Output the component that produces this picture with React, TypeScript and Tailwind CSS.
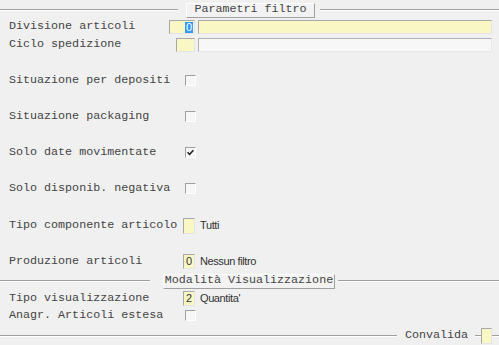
import React from 'react';

/* Courier-like label text used across the form */
const mono = "font-['Liberation_Mono','Courier_New',monospace] text-[11.7px] leading-none text-[#444]";
const sans = "font-['Liberation_Sans',Arial,sans-serif] text-[11px] leading-none text-[#333] tracking-[-0.4px]";

function Etched({ className = '' }: { className?: string }) {
  return <div className={`h-0 border-t border-t-[#a0a0a0] border-b border-b-white ${className}`} />;
}

function RaisedButton({ label, width }: { label: string; width: string }) {
  return (
    <div
      className={`${width} h-[15px] flex items-center justify-center bg-[#f2f2f2] border border-t-white border-l-white border-r-[#a0a0a0] border-b-[#a0a0a0] ${mono}`}
    >
      {label}
    </div>
  );
}

function Checkbox({ checked = false }: { checked?: boolean }) {
  return (
    <div className="w-[11px] h-[11px] bg-[#f6f6f6] border border-t-[#a0a0a0] border-l-[#a0a0a0] border-r-white border-b-white flex items-center justify-center">
      {checked && (
        <svg width="7" height="7" viewBox="0 0 7 7">
          <path d="M0.5 3.2 L2.6 5.3 L6.5 1.2" stroke="#222" strokeWidth="1.6" fill="none" />
        </svg>
      )}
    </div>
  );
}

function YellowBox({ value = '', className = '' }: { value?: string; className?: string }) {
  return (
    <div
      className={`bg-[#f9f7c4] border border-t-[#a8a8a8] border-l-[#a8a8a8] border-r-[#e4e4e4] border-b-[#e4e4e4] flex items-center justify-center ${sans} tracking-normal text-[#222] ${className}`}
    >
      {value}
    </div>
  );
}

function Row({
  label,
  control,
  extra,
  className = '',
}: {
  label: string;
  control: React.ReactNode;
  extra?: React.ReactNode;
  className?: string;
}) {
  return (
    <div className={`flex items-center ${className}`}>
      <div className="w-[196px] flex items-center justify-between pl-[9px]">
        <span className={mono}>{label}</span>
        {control}
      </div>
      {extra}
    </div>
  );
}

export default function App() {
  return (
    <div className="w-[499px] h-[345px] bg-[#f0f0f0] overflow-hidden flex flex-col pt-[1px]">
      {/* Header: Parametri filtro */}
      <div className="h-[18px] flex items-center shrink-0">
        <Etched className="w-[178px]" />
        <div className="ml-[8px]">
          <RaisedButton label="Parametri filtro" width="w-[129px]" />
        </div>
        <Etched className="ml-[5px] flex-1" />
      </div>

      <Row
        className="h-[16px] shrink-0"
        label="Divisione articoli"
        control={
          <div className="mr-[1px] w-[26px] h-[14px] bg-[#f9f7c4] border border-t-[#a8a8a8] border-l-[#a8a8a8] border-r-[#e4e4e4] border-b-[#e4e4e4] flex items-center justify-end pr-[1px]">
            <span className={`${sans} tracking-normal bg-[#3399ff] text-white px-[1px] h-[11px] flex items-center`}>0</span>
          </div>
        }
        extra={<div className="ml-[2px] w-[294px] h-[14px] bg-[#f9f7c4] border border-t-[#a8a8a8] border-l-[#a8a8a8] border-r-[#e4e4e4] border-b-[#e4e4e4]" />}
      />

      <Row
        className="h-[20px] shrink-0"
        label="Ciclo spedizione"
        control={<YellowBox className="mr-[1px] w-[19px] h-[14px]" />}
        extra={<div className="ml-[2px] w-[294px] h-[14px] bg-[#f7f7f7] border border-t-[#b0b0b0] border-l-[#b0b0b0] border-r-[#e8e8e8] border-b-[#e8e8e8]" />}
      />

      <Row className="mt-[16px] h-[20px] shrink-0" label="Situazione per depositi" control={<Checkbox />} />
      <Row className="mt-[16px] h-[20px] shrink-0" label="Situazione packaging" control={<Checkbox />} />
      <Row className="mt-[16px] h-[20px] shrink-0" label="Solo date movimentate" control={<Checkbox checked />} />
      <Row className="mt-[16px] h-[20px] shrink-0" label="Solo disponib. negativa" control={<Checkbox />} />

      <Row
        className="mt-[16px] h-[21px] shrink-0"
        label="Tipo componente articolo"
        control={<YellowBox className="mr-[1px] w-[12px] h-[16px]" />}
        extra={<span className={`ml-[4px] ${sans}`}>Tutti</span>}
      />

      <Row
        className="mt-[15px] h-[21px] shrink-0"
        label="Produzione articoli"
        control={<YellowBox value="0" className="mr-[1px] w-[12px] h-[15px]" />}
        extra={<span className={`ml-[4px] ${sans}`}>Nessun filtro</span>}
      />

      {/* Modalità Visualizzazione */}
      <div className="h-[18px] flex items-center shrink-0">
        <Etched className="w-[150px]" />
        <div className="ml-[13px]">
          <RaisedButton label="Modalità Visualizzazione" width="w-[172px]" />
        </div>
        <Etched className="ml-[3px] flex-1" />
      </div>

      <Row
        className="h-[17px] shrink-0"
        label="Tipo visualizzazione"
        control={<YellowBox value="2" className="mr-[1px] w-[12px] h-[15px]" />}
        extra={<span className={`ml-[4px] ${sans}`}>Quantita'</span>}
      />

      <Row className="h-[18px] shrink-0" label="Anagr. Articoli estesa" control={<Checkbox />} />

      {/* Convalida */}
      <div className="h-[22px] flex items-center shrink-0">
        <Etched className="w-[397px]" />
        <span className={`ml-[8px] ${mono}`}>Convalida</span>
        <Etched className="ml-[7px] w-[6px]" />
        <YellowBox className="w-[11px] h-[16px]" />
        <Etched className="flex-1" />
      </div>
    </div>
  );
}
